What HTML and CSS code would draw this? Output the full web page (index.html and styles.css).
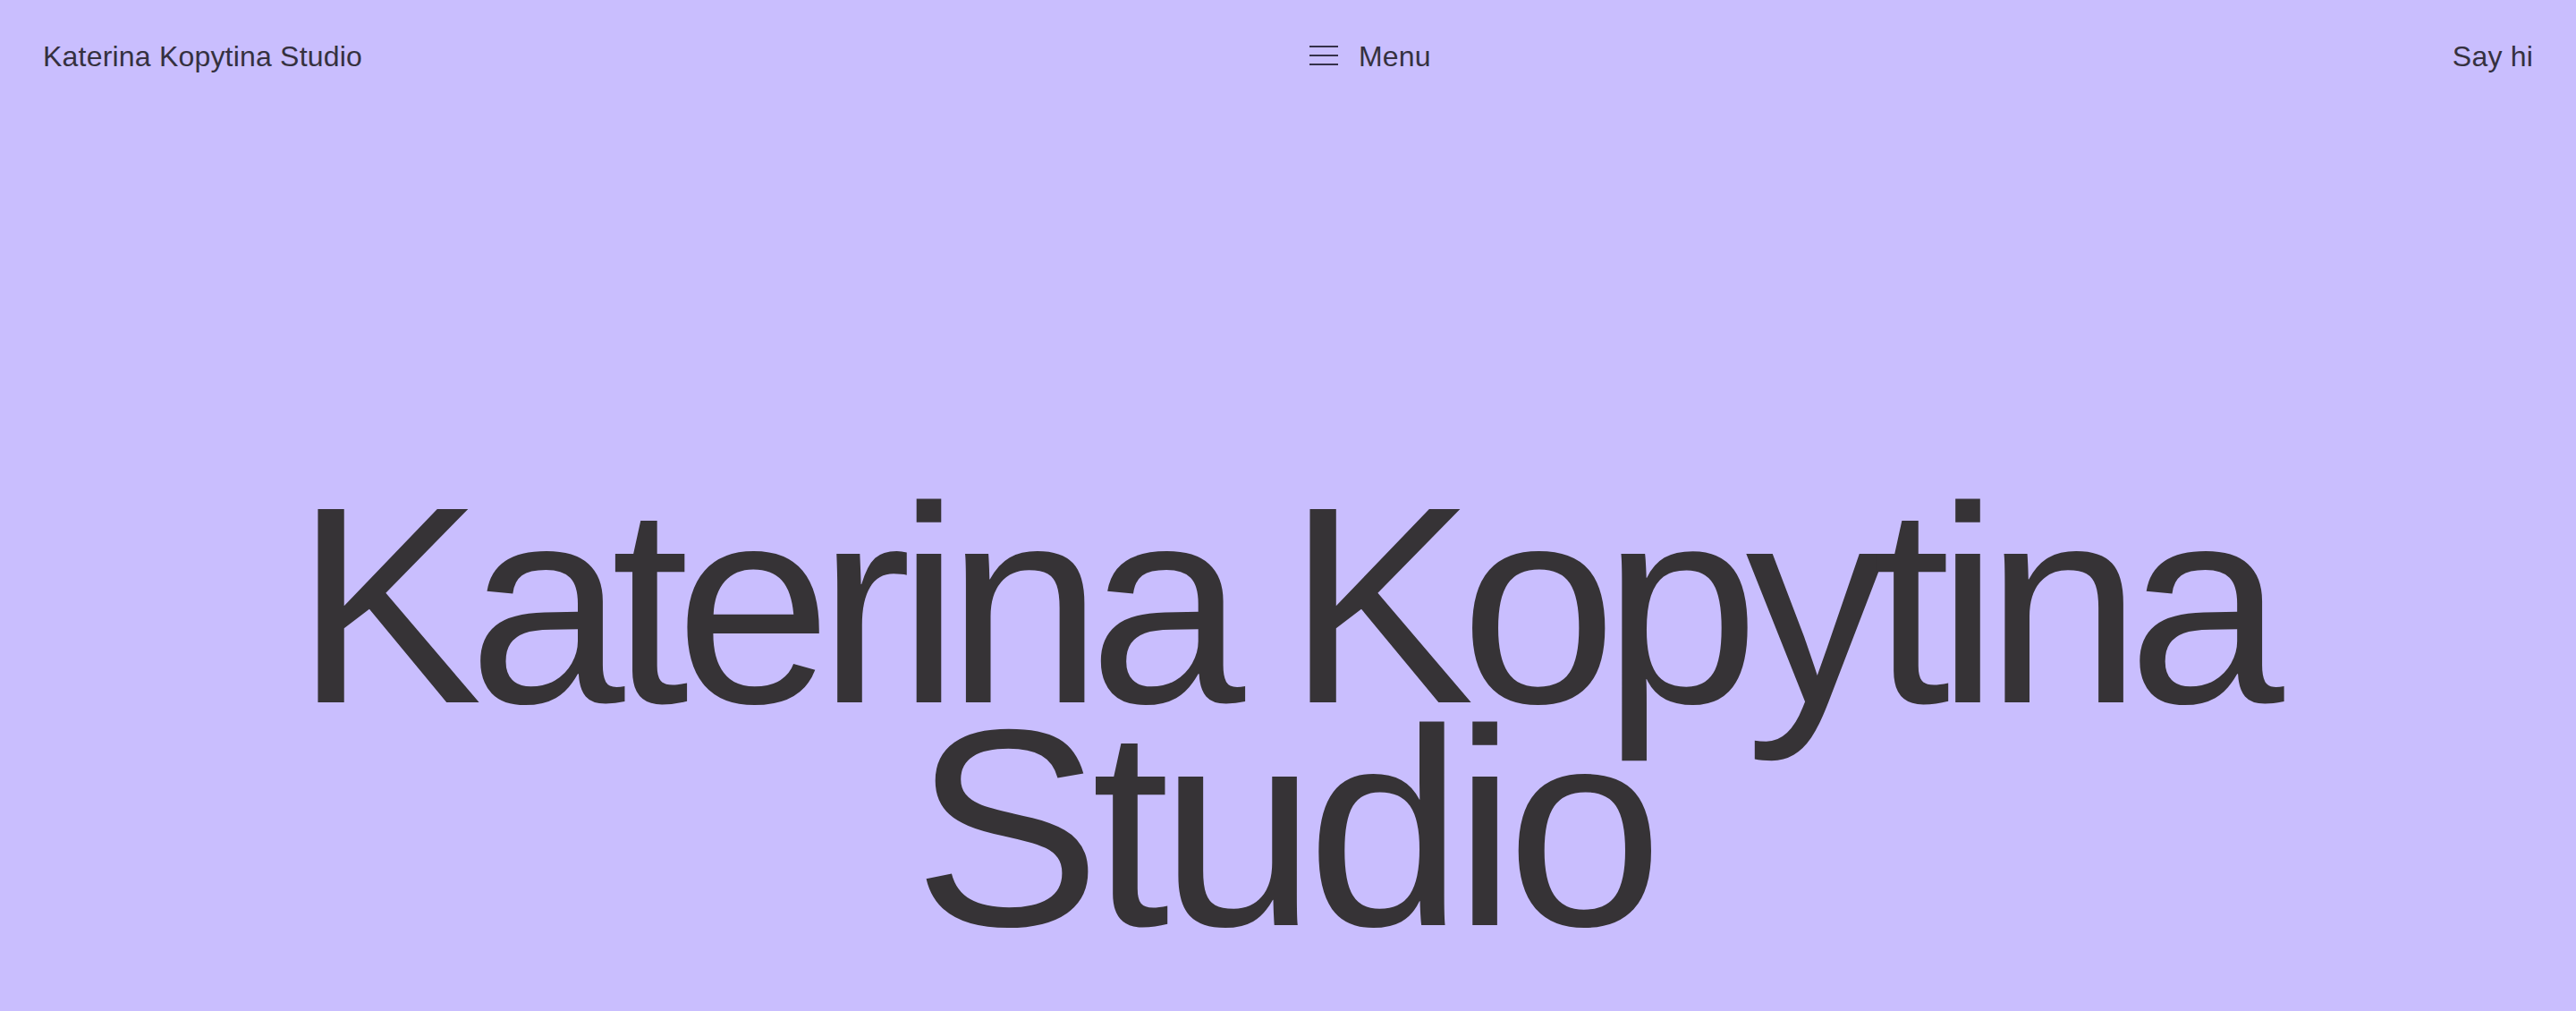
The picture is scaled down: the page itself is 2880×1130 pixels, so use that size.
FILE: index.html
```html
<!DOCTYPE html>
<html lang="en">
<head>
<meta charset="utf-8">
<title>Katerina Kopytina Studio</title>
<link rel="stylesheet" href="styles.css">
</head>
<body>
<div class="page">
  <header class="site-header">
    <a class="brand" href="#">Katerina Kopytina Studio</a>
    <div class="header-right">
      <button class="menu-btn" type="button">
        <svg class="menu-icon" width="32" height="22" viewBox="0 0 32 22" aria-hidden="true">
          <rect x="0" y="0" width="32" height="2"/>
          <rect x="0" y="10" width="32" height="2"/>
          <rect x="0" y="20" width="32" height="2"/>
        </svg>
        <span class="menu-label">Menu</span>
      </button>
      <a class="say-hi" href="#">Say hi</a>
    </div>
  </header>
  <main class="hero">
    <h1 class="hero-title">
      <span class="hero-line hero-line--name">Katerina Kopytina</span>
      <span class="hero-line hero-line--studio">Studio</span>
    </h1>
  </main>
</div>
</body>
</html>
```
FILE: styles.css
```css
* {
  box-sizing: border-box;
}

html, body {
  margin: 0;
  padding: 0;
}

body {
  background: #c9befe;
  color: #363338;
  font-family: "Liberation Sans", Arial, sans-serif;
}

.page {
  min-height: 100vh;
  display: flex;
  flex-direction: column;
}

.site-header {
  display: grid;
  grid-template-columns: 1fr 1fr;
  column-gap: 48px;
  padding: 45px 48px 0 48px;
  font-size: 32px;
  line-height: 37px;
  letter-spacing: 0.2px;
}

.brand,
.say-hi {
  color: #35313f;
  text-decoration: none;
}

.header-right {
  display: flex;
  justify-content: space-between;
  align-items: center;
}

.menu-btn {
  display: flex;
  align-items: center;
  gap: 23px;
  padding: 0;
  margin: 0;
  border: 0;
  background: transparent;
  color: #35313f;
  font: inherit;
  letter-spacing: inherit;
  cursor: pointer;
}

.menu-icon {
  display: block;
  fill: #35314a;
  margin-bottom: 4px;
}

.hero {
  flex: 1;
  display: flex;
  flex-direction: column;
  justify-content: flex-end;
  padding-bottom: 80px;
}

.hero-title {
  margin: 0;
  font-weight: 400;
  font-size: 314px;
  line-height: 249px;
  text-align: center;
  color: #363336;
}

.hero-line {
  display: block;
}

.hero-line--name {
  letter-spacing: -15.3px;
  word-spacing: -10px;
  padding-right: 12px;
}

.hero-line--studio {
  letter-spacing: -10.5px;
  padding-right: 10px;
}
```
